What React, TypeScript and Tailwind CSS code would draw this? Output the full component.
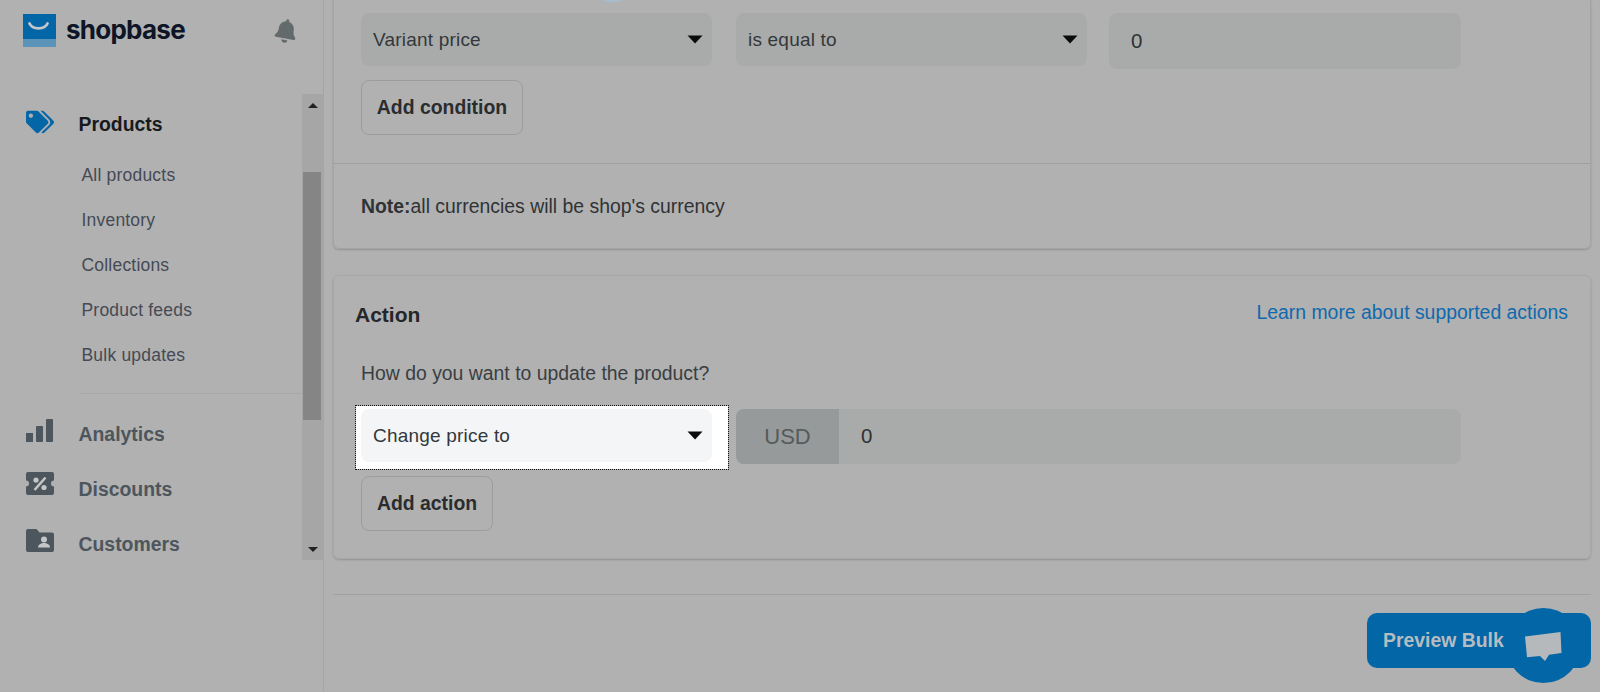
import { FaBell, FaTags } from 'react-icons/fa'

const FONT = "font-['Liberation_Sans',Arial,sans-serif]"

function Caret({ className = '' }: { className?: string }) {
  return (
    <svg width="16" height="9" viewBox="0 0 16 9" className={className}>
      <path d="M0.5 0.5h15L8 8.5z" fill="#0a0a0a" />
    </svg>
  )
}

function Logo() {
  return (
    <svg width="34" height="34" viewBox="0 0 34 34" className="shrink-0">
      <rect width="33" height="33" fill="#0366a6" />
      <rect y="25" width="33" height="8" fill="#5c93b8" />
      <path d="M6.5 9.5c3 6.5 15 6.5 18 0" fill="none" stroke="#c4c8ca" strokeWidth="2.8" strokeLinecap="round" />
    </svg>
  )
}

function ChartIcon() {
  return (
    <svg width="28" height="23" viewBox="0 0 28 23" fill="#4d565c">
      <rect x="0" y="14" width="7" height="9" />
      <rect x="10" y="7" width="7" height="16" rx="1" />
      <rect x="20" y="0" width="7" height="23" rx="1" />
    </svg>
  )
}

function TicketIcon() {
  return (
    <svg width="28" height="23" viewBox="0 0 28 23">
      <path
        d="M2 0h24a2 2 0 0 1 2 2v6.5a3 3 0 0 0 0 6V21a2 2 0 0 1-2 2H2a2 2 0 0 1-2-2v-6.5a3 3 0 0 0 0-6V2a2 2 0 0 1 2-2z"
        fill="#4d565c"
      />
      <path d="M8.5 18L19.5 5.5" stroke="#c4c6c8" strokeWidth="2.6" />
      <circle cx="10" cy="8" r="2.6" fill="#c4c6c8" />
      <circle cx="18" cy="15.5" r="2.6" fill="#c4c6c8" />
    </svg>
  )
}

function FolderIcon() {
  return (
    <svg width="28" height="23" viewBox="0 0 28 23">
      <path
        d="M0 2a2 2 0 0 1 2-2h8.5l3 3.5H26a2 2 0 0 1 2 2V21a2 2 0 0 1-2 2H2a2 2 0 0 1-2-2z"
        fill="#4d565c"
      />
      <circle cx="18" cy="10.5" r="3" fill="#c4c6c8" />
      <path d="M12 18.5c0-6 12-6 12 0z" fill="#c4c6c8" />
    </svg>
  )
}

function SubItem({ label }: { label: string }) {
  return (
    <div className="h-[45px] pl-[81.5px] flex items-center text-[17.5px] tracking-[0.2px] text-[#454a55]">{label}</div>
  )
}

function MainItem({ icon, label, iconClass }: { icon: React.ReactNode; label: string; iconClass: string }) {
  return (
    <div className="h-[55px] flex items-center">
      <div className={`w-[78.5px] pl-[26px] shrink-0 ${iconClass}`}>{icon}</div>
      <span className="text-[19.4px] font-bold text-[#4d565c]">{label}</span>
    </div>
  )
}

function Sidebar() {
  return (
    <aside className="w-[324px] shrink-0 h-[692px] border-r border-[#a5a5a5]">
      <div className="h-[94px] flex items-start pt-[14px] pl-[23px] pr-[26px]">
        <Logo />
        <span className="ml-[9px] mt-[-1px] text-[26px] leading-[34px] font-['Inter',sans-serif] font-bold tracking-[-0.75px] text-[#0e1526]">
          shopbase
        </span>
        <FaBell className="ml-auto mt-[5px] w-[22px] h-[24px] text-[#636a6c] rotate-[10deg]" />
      </div>
      <div className="flex h-[466px]">
        <nav className="flex-1 min-w-0">
          <div className="h-[59px] pt-[2px] flex items-center">
            <div className="w-[78.5px] pl-[26px] pb-[6px] shrink-0">
              <FaTags className="w-[28px] h-[24px] text-[#0366a6]" />
            </div>
            <span className="text-[19.4px] font-bold text-[#171a1d]">Products</span>
          </div>
          <SubItem label="All products" />
          <SubItem label="Inventory" />
          <SubItem label="Collections" />
          <SubItem label="Product feeds" />
          <SubItem label="Bulk updates" />
          <div className="ml-[79px] mt-[15px] mb-[13px] border-t border-[#a8a8a8]" />
          <MainItem icon={<ChartIcon />} label="Analytics" iconClass="pb-[9px]" />
          <MainItem icon={<TicketIcon />} label="Discounts" iconClass="pb-[13px]" />
          <MainItem icon={<FolderIcon />} label="Customers" iconClass="pb-[9px]" />
        </nav>
        {/* scrollbar */}
        <div className="w-[21px] shrink-0 bg-[#a6a6a6] flex flex-col items-center">
          <div className="h-[78px] w-full flex items-center justify-center pb-[56px]">
            <span className="w-0 h-0 border-x-[5px] border-x-transparent border-b-[5px] border-b-[#222]" />
          </div>
          <div className="h-[248px] w-[18px] self-start ml-[1px] bg-[#858585]" />
          <div className="flex-1 w-full flex items-end justify-center pb-[8px]">
            <span className="w-0 h-0 border-x-[5px] border-x-transparent border-t-[5px] border-t-[#222]" />
          </div>
        </div>
      </div>
    </aside>
  )
}

function SelectBox({ label, bg = 'bg-[#a9abaa]', width = 'w-[351px]' }: { label: string; bg?: string; width?: string }) {
  return (
    <div className={`${width} h-[53px] rounded-[8px] ${bg} flex items-center justify-between pl-[12px] pr-[9px] shrink-0`}>
      <span className="pt-[1px] text-[19px] tracking-[0.2px] text-[#33383b]">{label}</span>
      <Caret />
    </div>
  )
}

function OutlineButton({ label, width }: { label: string; width: string }) {
  return (
    <button className={`${width} h-[55px] rounded-[8px] border border-[#9d9d9d] flex items-center justify-center text-[19.4px] font-bold text-[#2a2c2e]`}>
      {label}
    </button>
  )
}

export default function App() {
  return (
    <div className={`${FONT} relative w-[1600px] h-[692px] overflow-hidden bg-[#b1b1b1] flex`}>
      <Sidebar />
      <main className="flex-1 min-w-0 pl-[9px] pr-[9px]">
        {/* conditions card, top is scrolled away */}
        <section className="h-[249px] rounded-b-[6px] border-x border-b border-[#a4a4a4] shadow-[0_1px_2px_rgba(0,0,0,0.18)]">
          <div className="h-[164px] pl-[27px] pt-[13px] border-b border-[#a0a0a0]">
            <div className="flex items-start">
              <SelectBox label="Variant price" />
              <div className="ml-[24px]">
                <SelectBox label="is equal to" />
              </div>
              <div className="ml-[22px] w-[352px] h-[56px] rounded-[8px] bg-[#a9abaa] flex items-center pl-[22px] text-[20.5px] text-[#2f3234]">
                0
              </div>
            </div>
            <div className="mt-[11px]">
              <OutlineButton label="Add condition" width="w-[162px]" />
            </div>
          </div>
          <p className="pl-[27px] pt-[31px] text-[19.4px] leading-[22px] text-[#2f3336]">
            <b>Note:</b>all currencies will be shop's currency
          </p>
        </section>

        {/* action card */}
        <section className="mt-[26px] h-[284px] rounded-[6px] border border-[#a8a8a8] shadow-[0_1px_2px_rgba(0,0,0,0.18)] pl-[21px] pr-[22px]">
          <div className="flex items-start justify-between pt-[26px]">
            <h2 className="text-[21px] leading-[26px] font-bold text-[#24272a]">Action</h2>
            <a className="-mt-[2px] text-[19.4px] leading-[24px] text-[#0f69ad]">Learn more about supported actions</a>
          </div>
          <div className="pl-[1px]">
            <p className="pl-[5px] mt-[33px] text-[19.4px] leading-[24px] text-[#3a3e42]">How do you want to update the product?</p>
            <div className="flex items-start mt-[21px]">
              <div className="w-[372px] h-[63px] bg-white outline-1 outline-dotted outline-[#111] flex items-start pt-[3px] pl-[5px] shrink-0">
                <SelectBox label="Change price to" bg="bg-[#f4f5f7]" />
              </div>
              <div className="ml-[8px] mt-[3px] w-[725px] h-[55px] rounded-[8px] bg-[#a9abaa] flex overflow-hidden">
                <div className="w-[103px] bg-[#979a9a] flex items-center justify-center text-[22px] text-[#555a5c]">USD</div>
                <div className="flex-1 flex items-center pl-[22px] text-[20.5px] text-[#2f3234]">0</div>
              </div>
            </div>
            <div className="pl-[5px] mt-[7px]">
              <OutlineButton label="Add action" width="w-[132px]" />
            </div>
          </div>
        </section>

        <div className="mt-[35px] border-t border-[#a0a0a0]" />
        <div className="flex justify-end mt-[18px]">
          <button className="w-[224px] h-[55px] rounded-[10px] bg-[#0366a6] pl-[16px] pt-[1px] flex items-center text-[19.4px] font-bold text-[#b5bcc2]">
            Preview Bulk
          </button>
        </div>
      </main>

      {/* step dot peeking from above */}
      <div className="absolute left-[601px] top-[-12px] w-[24px] h-[14px] rounded-full bg-[#a9bccb]" />

      {/* chat widget */}
      <div className="absolute left-[1506px] top-[608px] w-[75px] h-[75px] rounded-full bg-[#0366a6] flex items-center justify-center">
        <svg width="37" height="30" viewBox="0 0 37 30" className="mt-[2px]">
          <path d="M0 4.5L35.5 0l1 21-12.5 1.8L20 29l-5-5-13 1.2z" fill="#b6b9bc" />
        </svg>
      </div>
    </div>
  )
}
